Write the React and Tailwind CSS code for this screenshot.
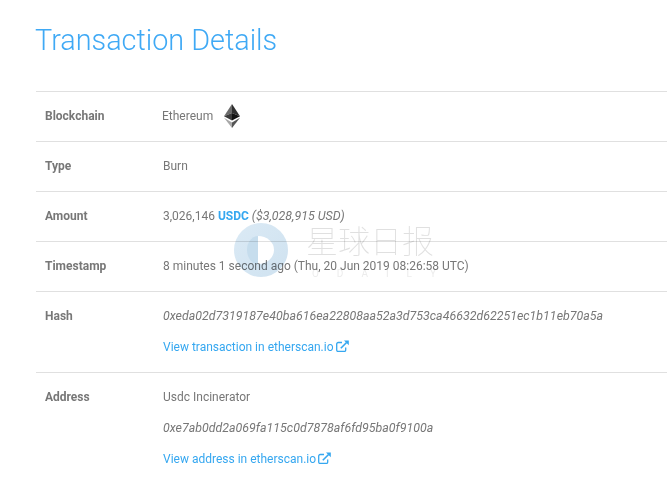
import React from "react";

const EthLogo = () => (
  <svg width="16" height="24" viewBox="0 0 16 24" className="ml-[11px]">
    <polygon points="8,0 0,12.2 8,9" fill="#6b6b6b" />
    <polygon points="8,0 16,12.2 8,9" fill="#2f2f2f" />
    <polygon points="0,12.2 8,9 8,16.6" fill="#3a3a3a" />
    <polygon points="16,12.2 8,9 8,16.6" fill="#111111" />
    <polygon points="0,13.8 8,18.6 8,24" fill="#a8a8a8" />
    <polygon points="16,13.8 8,18.6 8,24" fill="#555555" />
  </svg>
);

const LinkIcon = () => (
  <svg width="13" height="12" viewBox="0 0 13 12" fill="none" className="ml-[2px] mt-[-2px]">
    <path d="M6 2.5H2.2A1.5 1.5 0 0 0 .7 4v6a1.5 1.5 0 0 0 1.5 1.5h6A1.5 1.5 0 0 0 9.7 10V7.5" stroke="#35a7f0" strokeWidth="1.3" />
    <path d="M4.8 8.3 10.6 2.5" stroke="#35a7f0" strokeWidth="1.6" />
    <path d="M8 .4h4.8v4.8z" fill="#35a7f0" />
  </svg>
);

const Row = ({ label, children, className = "" }) => (
  <div className={`flex border-b border-[#e0e0e0] ${className}`}>
    <div className="w-[127px] shrink-0 pl-[9px] font-bold text-[#777]">{label}</div>
    <div className="flex-1 min-w-0">{children}</div>
  </div>
);

const ViewLink = ({ children }) => (
  <a className="flex items-center text-[#35a7f0]">
    {children}
    <LinkIcon />
  </a>
);

export default function App() {
  return (
    <div className="relative h-[500px] w-[667px] overflow-hidden bg-white pl-9 font-['Roboto',sans-serif] text-xs leading-4 text-[#777]">
      <h1 className="-ml-px pt-[22px] text-[28.8px] leading-9 font-light text-[#3fa9f5]">Transaction Details</h1>

      <div className="mt-[33px] border-t border-[#e0e0e0]">
        <Row label="Blockchain" className="h-[50px] items-center pb-[2px]">
          <div className="flex items-center">
            <span className="-ml-px">Ethereum</span>
            <EthLogo />
          </div>
        </Row>
        <Row label="Type" className="h-[50px] items-center pb-[2px]">Burn</Row>
        <Row label="Amount" className="h-[50px] items-center pb-[2px]">
          3,026,146 <b className="text-[#35a7f0]">USDC</b> <i className="text-[12.4px]">($3,028,915 USD)</i>
        </Row>
        <Row label="Timestamp" className="h-[50px] items-center pb-[2px]">
          8 minutes 1 second ago (Thu, 20 Jun 2019 08:26:58 UTC)
        </Row>
        <Row label="Hash" className="h-[81px] pt-4">
          <div className="flex flex-col gap-[15px]">
            <i className="text-[12.4px]">0xeda02d7319187e40ba616ea22808aa52a3d753ca46632d62251ec1b11eb70a5a</i>
            <ViewLink>View transaction in etherscan.io</ViewLink>
          </div>
        </Row>
        <div className="flex pt-4">
          <div className="w-[127px] shrink-0 pl-[9px] font-bold">Address</div>
          <div className="flex flex-col gap-[15px]">
            <span>Usdc Incinerator</span>
            <i className="text-[12.4px]">0xe7ab0dd2a069fa115c0d7878af6fd95ba0f9100a</i>
            <ViewLink>View address in etherscan.io</ViewLink>
          </div>
        </div>
      </div>

      {/* watermark */}
      <div className="pointer-events-none absolute top-[223px] left-[234px] flex mix-blend-multiply">
        <svg width="54" height="54" viewBox="0 0 54 54">
          <defs>
            <linearGradient id="wm" x1="0" y1="0" x2="1" y2="1">
              <stop offset="0" stopColor="#dbeaf5" />
              <stop offset="1" stopColor="#cfe2f0" />
            </linearGradient>
          </defs>
          <circle cx="27" cy="27" r="27" fill="url(#wm)" />
          <path d="M24 13 A16 14 0 0 1 24 41 Z" fill="#ffffff" />
          <path d="M24 13 A11 14 0 0 0 24 41 Z" fill="#c6dded" />
        </svg>
        <div className="ml-[18px] flex flex-col">
          <div className="mt-[-2px] font-['Noto_Sans_CJK_SC',sans-serif] text-[32px] leading-[36px] font-thin text-[#e0e0e0]">
            星球日报
          </div>
          <div className="mt-[11px] ml-[6px] flex w-[124px] justify-between text-[10px] leading-3 text-[#ececec]">
            <span>O</span>
            <span>D</span>
            <span>A</span>
            <span>I</span>
            <span>L</span>
            <span>Y</span>
          </div>
        </div>
      </div>
    </div>
  );
}
